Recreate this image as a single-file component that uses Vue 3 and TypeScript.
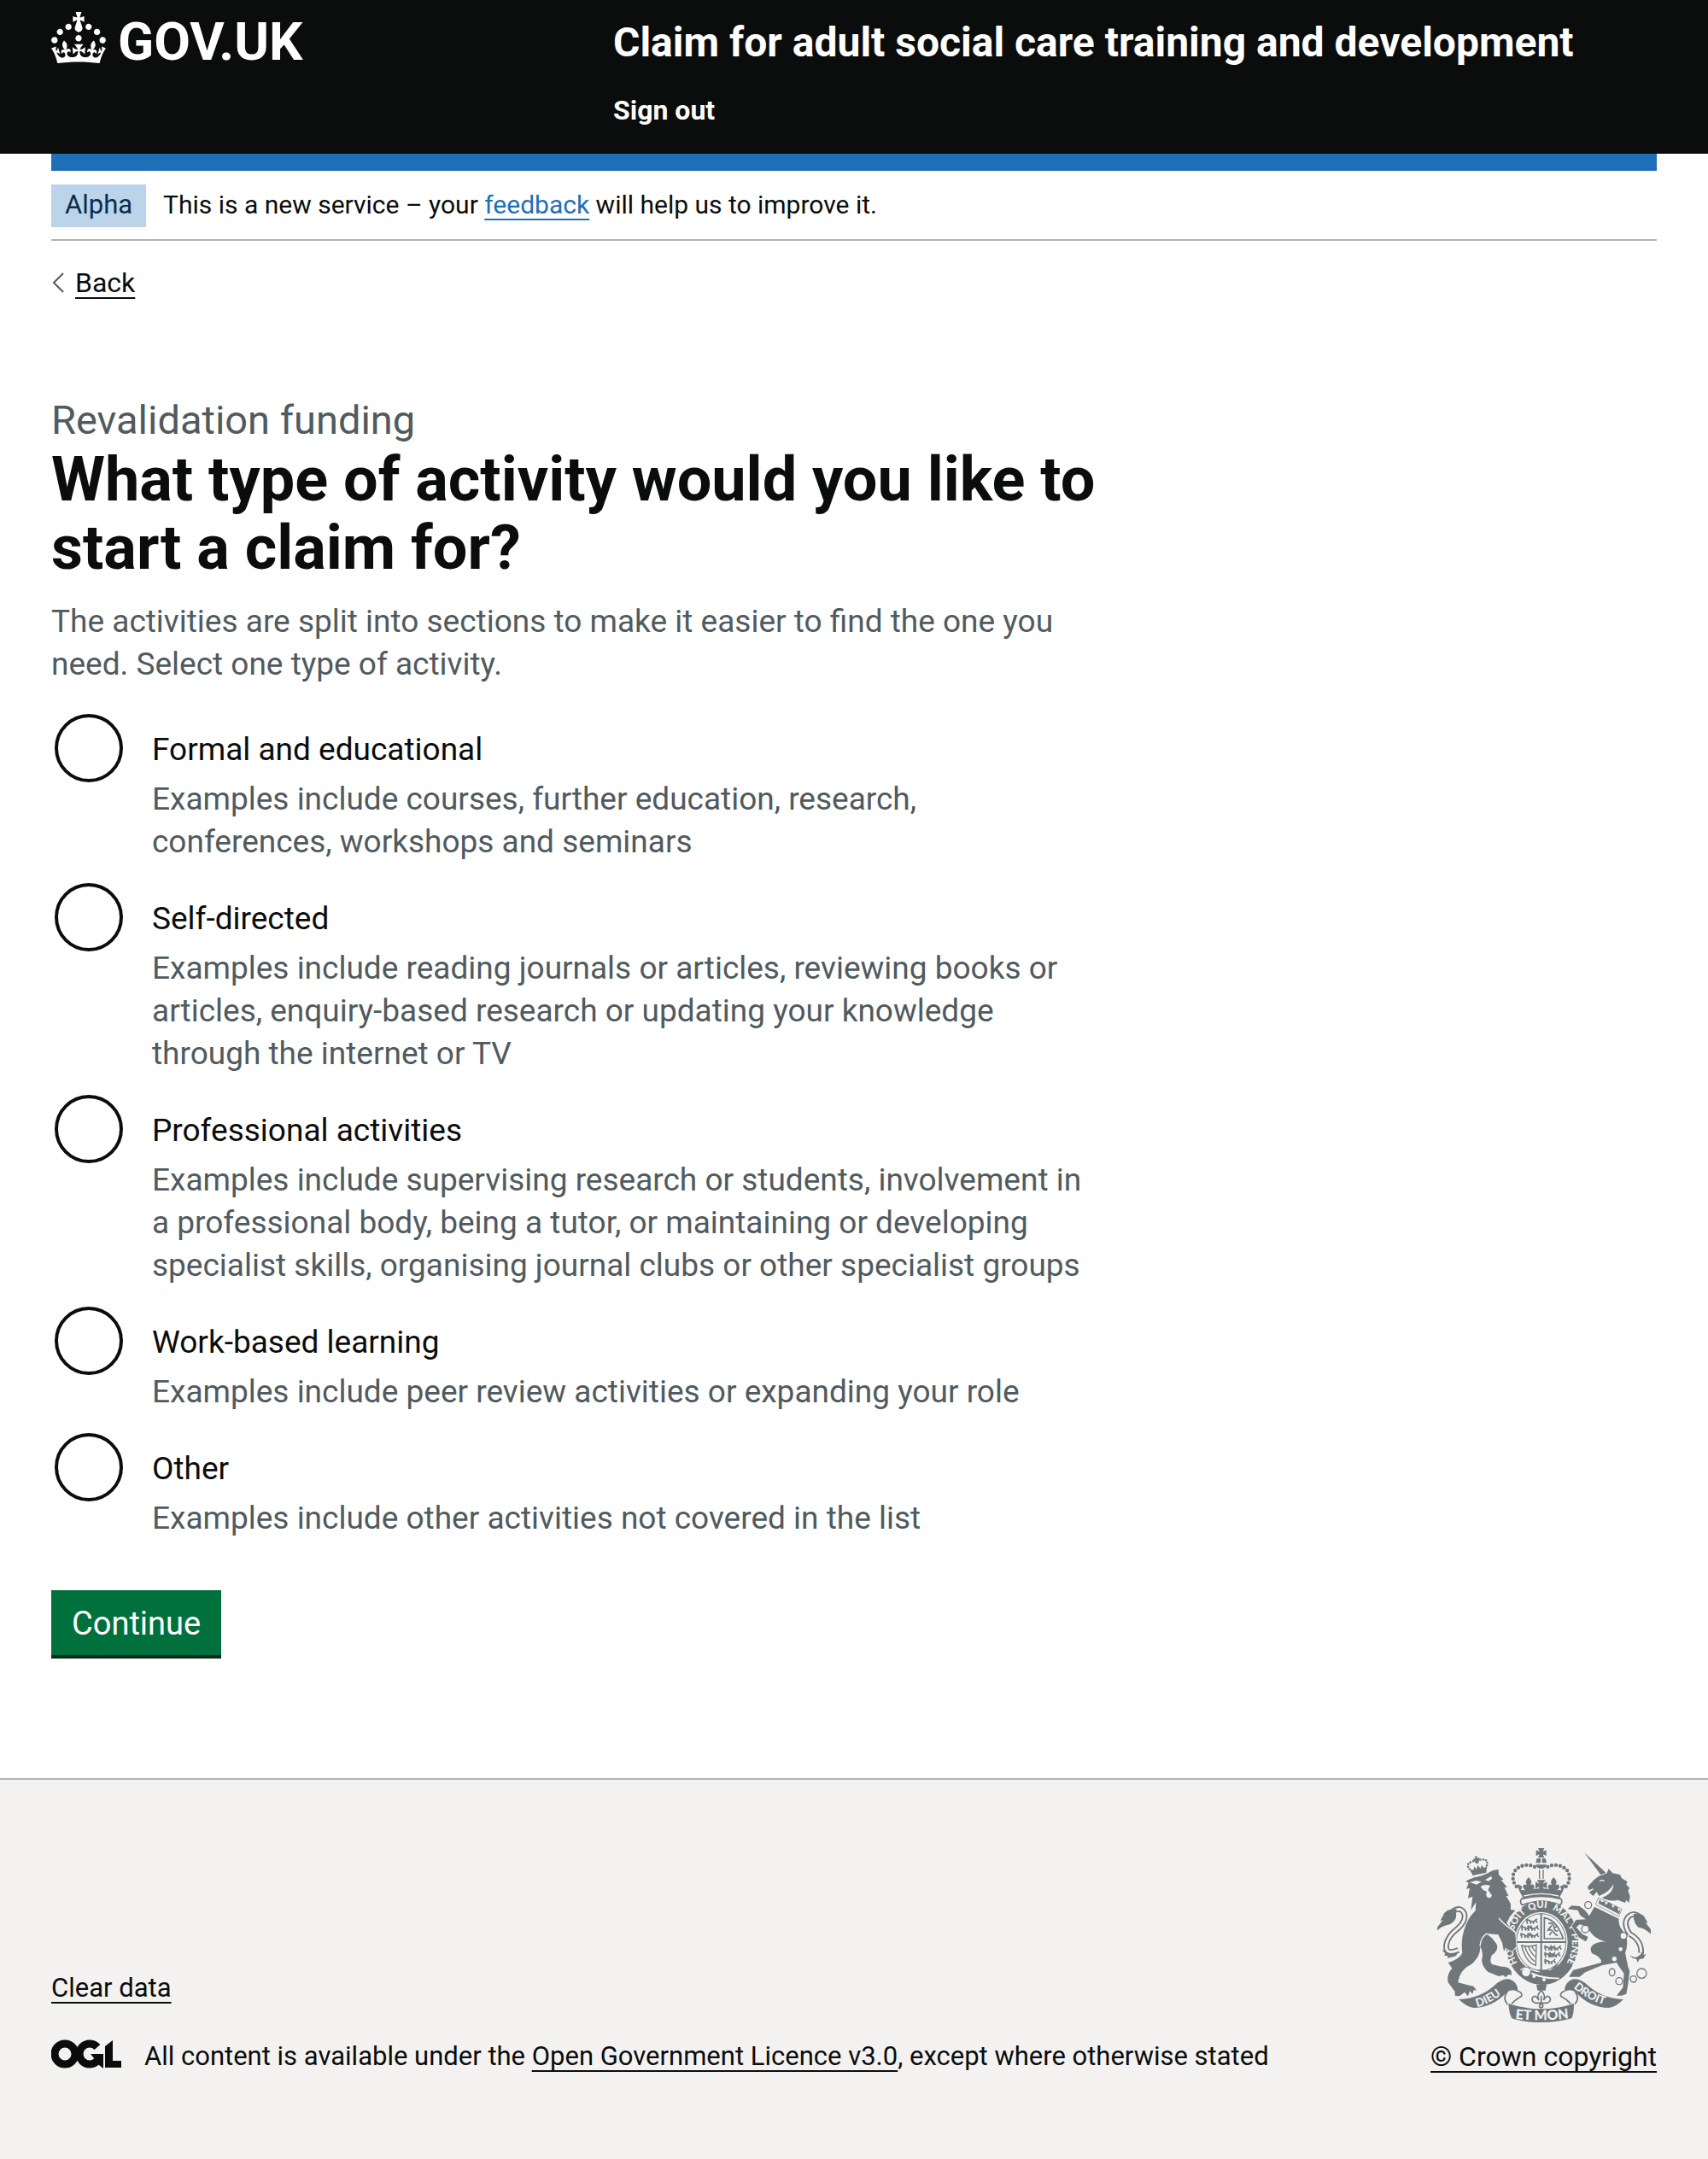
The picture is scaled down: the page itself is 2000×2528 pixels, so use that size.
<script setup lang="ts">
import { ref } from 'vue'

interface Activity {
  id: string
  label: string
  hint: string
}

const activities: Activity[] = [
  {
    id: 'formal',
    label: 'Formal and educational',
    hint: 'Examples include courses, further education, research, conferences, workshops and seminars',
  },
  {
    id: 'self-directed',
    label: 'Self-directed',
    hint: 'Examples include reading journals or articles, reviewing books or articles, enquiry-based research or updating your knowledge through the internet or TV',
  },
  {
    id: 'professional',
    label: 'Professional activities',
    hint: 'Examples include supervising research or students, involvement in a professional body, being a tutor, or maintaining or developing specialist skills, organising journal clubs or other specialist groups',
  },
  {
    id: 'work-based',
    label: 'Work-based learning',
    hint: 'Examples include peer review activities or expanding your role',
  },
  {
    id: 'other',
    label: 'Other',
    hint: 'Examples include other activities not covered in the list',
  },
]

const selected = ref<string>('')
</script>

<template>
  <div class="page">
    <header class="header">
      <div class="header-grid">
        <a class="logo" href="#" aria-label="GOV.UK">
          <svg class="crown" viewBox="0 0 32 30" aria-hidden="true">
            <path
              d="M22.6 10.4c-1 .4-2-.1-2.4-1-.4-.9.1-2 1-2.4.9-.4 2 .1 2.4 1s-.1 2-1 2.4m-5.9 6.7c-.9.4-2-.1-2.4-1-.4-.9.1-2 1-2.4.9-.4 2 .1 2.4 1s-.1 2-1 2.4m10.8-3.7c-1 .4-2-.1-2.4-1-.4-.9.1-2 1-2.4.9-.4 2 .1 2.4 1s0 2-1 2.4m3.3 4.8c-1 .4-2-.1-2.4-1-.4-.9.1-2 1-2.4.9-.4 2 .1 2.4 1s-.1 2-1 2.4M17 4.7l2.3 1.2V2.5l-2.3.7-.2-.2.9-3h-3.4l.9 3-.2.2c-.1.1-2.3-.7-2.3-.7v3.4L15 4.7c.1.1.1.2.2.2l-1.3 4c-.1.2-.1.4-.1.6 0 1.1.8 2 1.9 2.2h.7c1-.2 1.9-1.1 1.9-2.1 0-.2 0-.4-.1-.6l-1.3-4c-.1-.2 0-.2.1-.3m-7.6 5.7c.9.4 2-.1 2.4-1 .4-.9-.1-2-1-2.4-.9-.4-2 .1-2.4 1s0 2 1 2.4m-5 3c.9.4 2-.1 2.4-1 .4-.9-.1-2-1-2.4-.9-.4-2 .1-2.4 1s.1 2 1 2.4m-3.2 4.8c.9.4 2-.1 2.4-1 .4-.9-.1-2-1-2.4-.9-.4-2 .1-2.4 1s0 2 1 2.4m14.8 11c4.4 0 8.6.3 12.3.8 1.1-4.5 2.4-7 3.7-8.8l-2.5-.9c.2 1.3.3 1.9 0 2.7-.4-.4-.8-1.1-1.1-2.3l-1.2 4c.7-.5 1.3-.8 2-.9-1.1 2.5-2.6 3.1-3.5 3-1.1-.2-1.7-1.2-1.5-2.1.3-1.2 1.5-1.5 2.1-.1 1.1-2.3-.8-3-2-2.3 1.9-1.9 2.1-3.5.6-5.6-2.1 1.6-2.1 3.2-1.2 5.5-1.2-1.4-3.2-.6-2.5 1.6.9-1.4 2.1-.5 1.9.8-.2 1.1-1.7 2.1-3.5 1.9-2.7-.2-2.9-2.1-2.9-3.6.7-.1 1.9.5 2.9 1.9l.4-4.3c-1.1 1.1-2.1 1.4-3.2 1.4.4-1.2 2.1-3 2.1-3h-5.4s1.7 1.9 2.1 3c-1.1 0-2.1-.2-3.2-1.4l.4 4.3c1-1.4 2.2-2 2.9-1.9-.1 1.5-.2 3.4-2.9 3.6-1.9.2-3.4-.8-3.5-1.9-.2-1.3 1-2.2 1.9-.8.7-2.3-1.2-3-2.5-1.6.9-2.2.9-3.9-1.2-5.5-1.5 2-1.3 3.7.6 5.6-1.2-.7-3.1 0-2 2.3.6-1.4 1.8-1.1 2.1.1.2.9-.3 1.9-1.5 2.1-.9.2-2.4-.5-3.5-3 .6 0 1.2.3 2 .9l-1.2-4c-.3 1.1-.7 1.9-1.1 2.3-.3-.8-.2-1.4 0-2.7l-2.9.9C1.3 23 2.6 25.5 3.7 30c3.7-.5 7.9-.8 12.3-.8"
            />
          </svg>
          <span class="logo-text">GOV.UK</span>
        </a>
        <div class="header-content">
          <a class="service-name" href="#">Claim for adult social care training and development</a>
          <nav aria-label="Account">
            <a class="sign-out" href="#">Sign out</a>
          </nav>
        </div>
      </div>
    </header>

    <div class="container">
      <div class="phase-banner">
        <strong class="tag">Alpha</strong>
        <span>This is a new service – your <a class="link feedback" href="#">feedback</a> will help us to improve it.</span>
      </div>

      <a class="back" href="#">
        <svg class="chevron" viewBox="0 0 16 24" aria-hidden="true">
          <path d="M14 1 3 12l11 11" />
        </svg>
        <span class="link">Back</span>
      </a>

      <main class="main">
        <form @submit.prevent>
          <fieldset class="fieldset" aria-describedby="activity-hint">
            <legend class="legend">
              <span class="caption">Revalidation funding</span>
              <h1 class="heading">What type of activity would you like to start a claim for?</h1>
            </legend>
            <p id="activity-hint" class="hint">
              The activities are split into sections to make it easier to find the one you need. Select one type of activity.
            </p>
            <div class="radios">
              <div v-for="item in activities" :key="item.id" class="radio-item">
                <input
                  :id="item.id"
                  v-model="selected"
                  class="radio"
                  type="radio"
                  name="activity"
                  :value="item.id"
                  :aria-describedby="item.id + '-hint'"
                />
                <div class="radio-text">
                  <label class="radio-label" :for="item.id">{{ item.label }}</label>
                  <p :id="item.id + '-hint'" class="hint">{{ item.hint }}</p>
                </div>
              </div>
            </div>
          </fieldset>
          <button class="button" type="submit">Continue</button>
        </form>
      </main>
    </div>

    <footer class="footer">
      <div class="footer-row">
        <div class="footer-meta">
          <a class="link" href="#">Clear data</a>
          <div class="licence">
            <svg class="ogl" viewBox="0 0 82 40" role="img" aria-label="Open Government Licence">
              <circle cx="16" cy="17" r="12" />
              <path d="M54 9A12 12 0 1 0 54 25" />
              <path class="solid" d="M46 17h15v17l-5-4-6-6V22z" />
              <path class="solid" d="M63 8l9-7v24h10v8H63z" />
            </svg>
            <span>All content is available under the <a class="link" href="#">Open Government Licence v3.0</a>, except where otherwise stated</span>
          </div>
        </div>

        <div class="copyright">
          <svg class="crest" viewBox="72 72 750 612" aria-hidden="true">
            <defs>
              <path id="motto-ring" d="M440 526A106 122 0 0 1 440 282A106 122 0 0 1 440 526" />
              <path id="motto-left" d="M212 630Q276 612 326 560" />
              <path id="motto-mid" d="M340 671Q437 682 540 669" />
              <path id="motto-right" d="M550 562Q604 612 684 628" />
              <g id="beast-row">
                <path d="M0 8q8-8 16-2t16-2l6-6M4 8v8M14 8l4 8M26 6v10M34 4l6 8M0 2l6-4" />
              </g>
            </defs>

            <!-- crown -->
            <path class="ink" d="M426 72h22l-5 12 12-5v20l-12-5 5 11h-22l5-11-12 5V79l12 5z" />
            <path class="ink" d="M422 108h13v16h-17zM440 108h12l4 16h-16zM418 130h38q-2 14-19 14t-19-14z" />
            <path class="beads" d="M414 138C384 120 334 140 338 178C340 198 350 208 358 214" />
            <path class="beads" d="M460 138C490 120 540 140 536 178C534 198 524 208 516 214" />
            <path class="line" d="M431 148v32M444 148v32" />
            <path class="ink" d="M422 184h30l-9 14 14-8v24l-14-6 6 14h-24l6-14-14 6v-24l14 8z" />
            <path class="ink" d="M393 174q16 16 6 28 14-8 14 8-4 8-12 12h-16q-8-4-12-12 0-16 14-8-10-12 6-28zM481 174q16 16 6 28 14-8 14 8-4 8-12 12h-16q-8-4-12-12 0-16 14-8-10-12 6-28z" />
            <path class="ink" d="M354 198l16 8-4 14q10-2 16 0 55-12 110 0 6-2 16 0l-4-14 16-8q-2 20-16 42l-4 12q-63-22-126 0l-4-12q-14-22-16-42z" />
            <path class="cut" d="M376 240q61-16 122 0" />
            <path class="outline" d="M368 250q69-18 138 0 8 10-2 22-67-24-134 0-10-12-2-22z" />

            <!-- garter -->
            <ellipse class="ink" cx="440" cy="404" rx="128" ry="148" />
            <ellipse class="paper" cx="437" cy="402" rx="93" ry="106" />
            <ellipse class="outline thin" cx="437" cy="402" rx="87" ry="100" />
            <path class="line wide" d="M437 302v200M350 402h174" />
            <g class="beasts">
              <use href="#beast-row" x="384" y="322" />
              <use href="#beast-row" x="366" y="346" />
              <use href="#beast-row" x="388" y="346" />
              <use href="#beast-row" x="364" y="372" />
              <use href="#beast-row" x="388" y="372" />
              <use href="#beast-row" x="448" y="416" />
              <use href="#beast-row" x="468" y="416" />
              <use href="#beast-row" x="448" y="440" />
              <use href="#beast-row" x="464" y="440" />
              <use href="#beast-row" x="448" y="464" />
              <path d="M448 316q46 10 66 74h-66zM462 336q18-2 20 14t14 12M458 362q14-8 22 4t16 14M474 344l-12 14M484 352l10-8M466 378l8-12" />
            </g>
            <path class="line" d="M368 414q30 6 52-2l-2 72q-34-8-50-70zM380 418q10 34 34 52M392 418q8 22 24 36M404 416q4 10 12 18" />
            <path class="ink" d="M420 500h50l30-30q-16 40-46 46z" />
            <path class="cut wide" d="M370 496q60 36 130 34" />
            <path class="ink" d="M384 508q52 28 116 24-26 20-60 19-34-2-66-25z" />
            <circle class="outline" cx="384" cy="508" r="17" />
            <path class="cut" d="M364 500q20-16 36 4" />
            <circle class="paper" cx="412" cy="522" r="6" />
            <circle class="paper" cx="447" cy="534" r="6" />
            <g class="ring-text">
              <text><textPath href="#motto-ring" startOffset="104">HO</textPath></text>
              <text><textPath href="#motto-ring" startOffset="222">SOIT</textPath></text>
              <text><textPath href="#motto-ring" startOffset="312">QUI</textPath></text>
              <text><textPath href="#motto-ring" startOffset="394">MAL</textPath></text>
              <text><textPath href="#motto-ring" startOffset="474">Y</textPath></text>
              <text><textPath href="#motto-ring" startOffset="506">PENSE</textPath></text>
            </g>

            <!-- lion -->
            <path class="tail" d="M146 430Q98 450 104 410Q110 380 142 356Q176 326 166 300Q154 276 126 294" />
            <path class="tail-gap" d="M146 430Q98 450 104 410Q110 380 142 356Q176 326 166 300Q154 276 126 294" />
            <path class="ink" d="M140 286Q100 284 92 310L82 328 92 324 72 350 70 362Q92 344 116 340 142 326 138 300zM88 430l14 2 6 12q20 4 40-10l-10 16q-12 6-22 6l-8 4 2-8-14-4 4-6z" />
            <path
              class="halo"
              d="M172 188L188 180Q230 172 268 150L287 147 288 166 305 182 296 184 318 210 308 210 322 240 314 240 330 268 330 288 346 290 326 314 316 336 346 372 350 418 334 434 322 430 312 422 306 434 300 404 286 376 244 372 264 388 280 408Q290 430 264 448 254 466 264 480L298 488Q324 488 332 504L333 518 322 516 312 526 304 518 288 522 252 508Q232 494 228 466 236 440 222 416 226 450 192 480 150 500 145 544L176 552 200 558 210 572 200 570 196 584 186 574 180 592 168 578 150 592 134 590 134 576 110 544Q104 516 124 494L110 474Q150 462 160 440 154 396 166 360 178 318 206 292L208 262 190 290 196 242 180 248 186 212 174 216 182 194z"
            />
            <path class="cut" d="M288 318Q310 344 348 368M222 416Q226 380 248 372" />
            <path class="paper" d="M186 192l22-6 20 4-18 10zM240 184l22-14 2 10-12 8zM224 208q12-12 34-4l-8 14 14 20q-4 12-14 8-10-6-4-22l-12-4z" />
            <g transform="rotate(-12 214 134)">
              <path class="beads small" d="M190 148Q168 122 194 116Q206 112 214 122Q222 112 236 116Q260 122 240 148" />
              <path class="ink" d="M210 100h9l-2 8 8-2v10l-8-2 2 12h-9l2-12-8 2v-10l8 2zM184 142l12 4 6-12 6 12 6-14 8 14 6-12 6 12 12-4-8 22h-48zM188 172h54l4 8h-62z" />
            </g>

            <!-- unicorn -->
            <path class="tail" d="M748 374Q722 336 744 312Q762 296 782 312M748 374Q790 396 788 440" />
            <path class="tail-gap" d="M748 374Q722 336 744 312Q762 296 782 312M748 374Q790 396 788 440" />
            <path class="ink" d="M762 302Q798 298 804 322L812 334 804 334 822 358V374Q800 352 778 350 758 330 762 302zM748 448l16 8q24-2 32-30 4 12 0 22l10-4-10 16-14 2-6 12-4-12-14-4z" />
            <path class="ink" d="M588 87L668 162 648 168z" />
            <path class="halo" d="M600 208L622 184 640 170 668 160 674 145 688 160 714 165 720 178 740 190 736 200 748 212 742 220 749 242 745 265 736 254 732 264 706 254Q680 262 650 246 690 232 691 198 678 226 640 240L632 226 620 240 606 228 620 214 604 220z" />
            <path
              class="halo"
              d="M606 310L624 278 710 320Q706 346 732 372 746 402 732 440L742 488 748 504 742 552 736 584 720 590H702L724 562 728 512Q712 492 702 474L650 484 592 508 572 524H534L550 500 590 490 648 474Q650 456 616 442 600 416 634 404 660 398 668 402 616 390 600 348L572 340 560 350 582 374 602 384 594 400 570 386 544 346 560 324 594 322 574 308 566 290 530 286 544 274 572 276 592 292z"
            />
            <path class="collar" d="M628 270l10-24 82 40-10 26z" />
            <path class="ink" d="M638 266l4-14 8 10 10-4 4 14 10-10 10 6 4 14 10-8 8 6 2 14 8-6-6 16z" />
            <path class="cut" d="M642 188q10-6 16 0M606 222l14-6" />
            <g class="chain">
              <circle cx="602" cy="272" r="12" />
              <circle cx="592" cy="356" r="13" />
              <circle cx="726" cy="380" r="12" />
              <circle cx="716" cy="427" r="9" />
              <circle cx="694" cy="461" r="10" />
              <ellipse cx="686" cy="508" rx="10" ry="13" />
              <circle cx="711" cy="539" r="12" />
              <circle cx="761" cy="532" r="11" />
              <circle cx="790" cy="512" r="17" />
            </g>

            <!-- ribbons -->
            <path class="halo" d="M148 603Q228 600 282 546Q322 518 346 546Q356 558 354 576Q334 564 316 578Q266 632 200 633Q174 630 148 603z" />
            <path class="outline" d="M354 574Q372 580 368 592Q346 604 332 620M318 576Q298 604 324 624" />
            <g transform="matrix(-1 0 0 1 874 0)">
              <path class="halo" d="M148 603Q228 600 282 546Q322 518 346 546Q356 558 354 576Q334 564 316 578Q266 632 200 633Q174 630 148 603z" />
              <path class="outline" d="M354 574Q372 580 368 592Q346 604 332 620M318 576Q298 604 324 624" />
            </g>
            <path class="halo" d="M322 618Q437 656 552 618Q552 656 544 670Q496 684 437 684Q376 684 334 670Q324 652 322 618z" />
            <path class="ink" d="M420 552h36l-4 20h-28z" />
            <path class="outline" d="M437 572q18 18 8 34 14-24 24-6 2 12-12 16h-40q-14-4-12-16 10-18 24 6-10-16 8-34zM437 590v30" />
            <circle class="outline" cx="437" cy="626" r="6" />
            <g class="ribbon-text">
              <text><textPath href="#motto-left">DIEU</textPath></text>
              <text><textPath href="#motto-right">DROIT</textPath></text>
              <text class="mid"><textPath href="#motto-mid" startOffset="50%" text-anchor="middle">ET MON</textPath></text>
            </g>
          </svg>
          <a class="link crown-link" href="#">© Crown copyright</a>
        </div>
      </div>
    </footer>
  </div>
</template>

<style>
body {
  margin: 0;
  background: #f3f2f1;
}
</style>

<style scoped>
.page {
  background: #ffffff;
  color: #0b0c0c;
  font-family: Roboto, 'Liberation Sans', sans-serif;
  font-size: 31px;
  line-height: 40px;
}

a {
  color: inherit;
  text-decoration: none;
}

.link {
  text-decoration: underline;
  text-decoration-thickness: 2px;
  text-underline-offset: 6px;
  text-decoration-skip-ink: none;
}

.header {
  background: #0b0c0c;
  color: #ffffff;
  padding: 0 60px;
}

.header-grid {
  display: grid;
  grid-template-columns: 35% 1fr;
  min-height: 180px;
}

.logo {
  display: flex;
  gap: 14px;
  align-self: start;
  padding-top: 14px;
}

.crown {
  width: 64px;
  height: 60px;
  fill: currentColor;
}

.logo-text {
  font-size: 62px;
  line-height: 70px;
  font-weight: 700;
}

.header-content {
  display: flex;
  flex-direction: column;
  gap: 29px;
  padding-top: 20px;
}

.service-name {
  font-size: 48px;
  line-height: 60px;
  font-weight: 700;
}

.sign-out {
  font-size: 32px;
  font-weight: 700;
}

.container {
  margin: 0 60px;
  border-top: 20px solid #1d70b8;
}

.phase-banner {
  display: flex;
  align-items: baseline;
  gap: 20px;
  padding: 16px 0 14px;
  border-bottom: 2px solid #b1b4b6;
  font-size: 30px;
}

.tag {
  padding: 4px 16px 6px;
  background: #bbd4ea;
  color: #0c2d4a;
  font-size: 31px;
  font-weight: 400;
}

.feedback {
  color: #1d70b8;
}

.back {
  display: flex;
  align-items: center;
  gap: 12px;
  width: fit-content;
  margin-top: 29px;
  font-size: 32px;
}

.chevron {
  width: 16px;
  height: 24px;
  fill: none;
  stroke: #505a5f;
  stroke-width: 2;
}

.main {
  box-sizing: border-box;
  max-width: 1226px;
  padding: 111px 0 140px;
}

.fieldset {
  min-width: 0;
  margin: 0;
  padding: 0;
  border: 0;
}

.legend {
  padding: 0;
}

.caption {
  display: block;
  color: #505a5f;
  font-size: 47px;
  line-height: 60px;
}

.heading {
  margin: 0 0 21px;
  font-size: 72px;
  line-height: 80px;
  font-weight: 700;
}

.hint {
  margin: 0;
  color: #505a5f;
  font-size: 37px;
  line-height: 50px;
}

.radios {
  display: flex;
  flex-direction: column;
  gap: 23px;
  margin: 33px 0 59px;
}

.radio-item {
  display: flex;
  align-items: flex-start;
  gap: 34px;
  padding-left: 4px;
}

.radio {
  appearance: none;
  box-sizing: border-box;
  flex: none;
  width: 80px;
  height: 80px;
  margin: 0;
  border: 4px solid #0b0c0c;
  border-radius: 50%;
  background: transparent;
}

.radio:checked {
  background: radial-gradient(#0b0c0c 20px, transparent 21px);
}

.radio-text {
  padding-top: 17px;
}

.radio-label {
  display: block;
  margin-bottom: 8px;
  font-size: 37px;
  line-height: 50px;
}

.button {
  display: block;
  margin: 0;
  padding: 14px 24px 12px;
  border: 0;
  border-bottom: 4px solid #002d18;
  border-radius: 0;
  background: #00703c;
  color: #ffffff;
  font: inherit;
  font-size: 38px;
  line-height: 50px;
}

.footer {
  padding: 80px 60px 99px;
  border-top: 2px solid #b1b4b6;
  background: #f3f2f1;
}

.footer-row {
  display: flex;
  justify-content: space-between;
  align-items: flex-end;
}

.footer-meta {
  display: flex;
  flex-direction: column;
  align-items: flex-start;
  gap: 40px;
}

.licence {
  display: flex;
  gap: 27px;
}

.ogl {
  flex: none;
  width: 82px;
  height: 40px;
  fill: none;
  stroke: #0b0c0c;
  stroke-width: 9;
}

.ogl .solid {
  fill: #0b0c0c;
  stroke: none;
}

.copyright {
  display: flex;
  flex-direction: column;
  align-items: center;
  gap: 20px;
}

.crown-link {
  font-size: 32px;
}

.crest {
  width: 250px;
  height: 204px;
}

.ink {
  fill: #6f777b;
}

.paper {
  fill: #f3f2f1;
}

.halo {
  fill: #6f777b;
  stroke: #f3f2f1;
  stroke-width: 5;
  paint-order: stroke;
}

.collar {
  fill: #f3f2f1;
  stroke: #6f777b;
  stroke-width: 2;
}

.outline {
  fill: #f3f2f1;
  stroke: #6f777b;
  stroke-width: 5;
}

.line,
.beasts {
  fill: none;
  stroke: #6f777b;
  stroke-width: 4;
}

.beasts {
  stroke-width: 5;
}

.thin {
  stroke-width: 3;
}

.line.wide {
  stroke-width: 6;
}

.cut {
  fill: none;
  stroke: #f3f2f1;
  stroke-width: 4;
}

.cut.wide {
  stroke-width: 7;
}

.beads {
  fill: none;
  stroke: #6f777b;
  stroke-width: 13;
  stroke-linecap: round;
  stroke-dasharray: 0 15;
}

.beads.small {
  stroke-width: 8;
  stroke-dasharray: 0 10;
}

.tail {
  fill: none;
  stroke: #6f777b;
  stroke-width: 20;
}

.tail-gap {
  fill: none;
  stroke: #f3f2f1;
  stroke-width: 9;
}

.chain {
  fill: #f3f2f1;
  stroke: #6f777b;
  stroke-width: 4;
}

.ring-text,
.ribbon-text {
  fill: #f3f2f1;
  font-family: Lato, sans-serif;
  font-size: 34px;
  font-weight: 900;
}

.ribbon-text {
  font-size: 40px;
}

.mid {
  font-size: 48px;
}
</style>
